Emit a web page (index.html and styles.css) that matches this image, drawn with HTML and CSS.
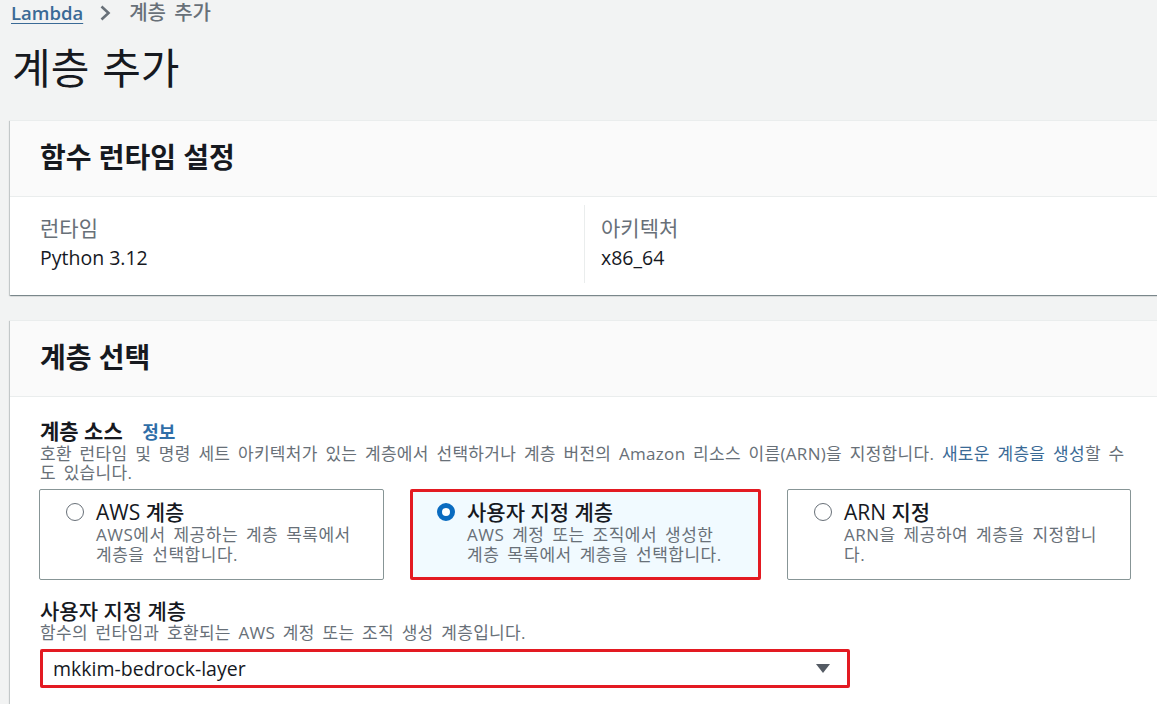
FILE: index.html
```html
<!DOCTYPE html>
<html lang="ko">
<head>
<meta charset="utf-8">
<title>계층 추가</title>
<link rel="stylesheet" href="styles.css">
</head>
<body>
<main class="page">
  <nav class="crumbs">
    <a class="crumb-link" href="#">Lambda</a>
    <svg class="crumb-sep" width="14" height="18" viewBox="0 0 14 18"><path d="M3.5 2.5 L10.5 9 L3.5 15.5" fill="none" stroke="#687078" stroke-width="2.6"/></svg>
    <span class="crumb-current">계층 추가</span>
  </nav>
  <h1 class="page-title">계층 추가</h1>

  <section class="card">
    <header class="card-head"><h2>함수 런타임 설정</h2></header>
    <div class="card-body kv">
      <div class="kv-col">
        <div class="kv-label">런타임</div>
        <div class="kv-value">Python 3.12</div>
      </div>
      <div class="kv-col kv-col-div">
        <div class="kv-label">아키텍처</div>
        <div class="kv-value">x86_64</div>
      </div>
    </div>
  </section>

  <section class="card card-second">
    <header class="card-head"><h2>계층 선택</h2></header>
    <div class="card-body form">
      <div class="field-label">계층 소스 <a class="info" href="#">정보</a></div>
      <p class="field-desc">호환 런타임 및 명령 세트 아키텍처가 있는 계층에서 선택하거나 계층 버전의 Amazon 리소스 이름(ARN)을 지정합니다. <a class="desc-link" href="#">새로운 계층을 생성</a>할 수 도 있습니다.</p>
      <div class="tiles">
        <label class="tile">
          <span class="radio"></span>
          <span class="tile-text">
            <span class="tile-title">AWS 계층</span>
            <span class="tile-desc">AWS에서 제공하는 계층 목록에서 계층을 선택합니다.</span>
          </span>
        </label>
        <label class="tile tile-selected">
          <span class="radio radio-on"></span>
          <span class="tile-text">
            <span class="tile-title">사용자 지정 계층</span>
            <span class="tile-desc">AWS 계정 또는 조직에서 생성한 계층 목록에서 계층을 선택합니다.</span>
          </span>
        </label>
        <label class="tile">
          <span class="radio"></span>
          <span class="tile-text">
            <span class="tile-title">ARN 지정</span>
            <span class="tile-desc">ARN을 제공하여 계층을 지정합니다.</span>
          </span>
        </label>
      </div>
      <div class="field-label field-label-2">사용자 지정 계층</div>
      <p class="field-desc field-desc-2">함수의 런타임과 호환되는 AWS 계정 또는 조직 생성 계층입니다.</p>
      <div class="select">
        <span class="select-value">mkkim-bedrock-layer</span>
        <svg class="caret" width="14" height="9" viewBox="0 0 14 9"><path d="M0 0 H14 L7 9 Z" fill="#545b64"/></svg>
      </div>
    </div>
  </section>
</main>
</body>
</html>
```

FILE: styles.css
```css
* { box-sizing: border-box; }
html, body {
  margin: 0;
  padding: 0;
  background: #f2f3f3;
  overflow: hidden;
}
body {
  font-family: "Open Sans", "Noto Sans CJK KR", sans-serif;
  color: #16191f;
  width: 1157px;
  height: 704px;
}
.page {
  padding: 0 0 0 10px;
}
.crumbs {
  display: flex;
  align-items: center;
  height: 26px;
  padding-left: 1px;
  font-size: 18.5px;
  line-height: 26px;
}
.crumb-link {
  color: #3a6a96;
  text-decoration: underline;
  text-underline-offset: 3px;
  font-weight: 600;
}
.crumb-sep {
  margin: 0 17px 0 15px;
}
.crumb-current {
  color: #687078;
  font-size: 20px;
  font-weight: 500;
  word-spacing: 3px;
}
.page-title {
  margin: 18px 0 0 2px;
  font-size: 42px;
  line-height: 48px;
  font-weight: 400;
  word-spacing: 2px;
}
.card {
  width: 1151px;
  margin-top: 28px;
  background: #fff;
  box-shadow: 0 1px 1px 0 rgba(0, 28, 36, 0.3), 1px 1px 1px 0 rgba(0, 28, 36, 0.15), -1px 1px 1px 0 rgba(0, 28, 36, 0.15);
  border-top: 1px solid #eaeded;
}
.card-second {
  margin-top: 25px;
}
.card-head {
  background: #fafafa;
  border-bottom: 1px solid #eaeded;
  padding: 19px 30px 22px;
}
.card-head h2 {
  margin: 0;
  font-size: 28px;
  line-height: 34px;
  font-weight: 700;
}
.card-body {
  padding: 8px 30px 12px;
}
.kv {
  display: grid;
  grid-template-columns: 544px 1fr;
}
.kv-col {
  padding: 8px 0 10px;
}
.kv-col-div {
  border-left: 1px solid #eaeded;
  padding-left: 16px;
}
.kv-label {
  color: #687078;
  font-size: 21px;
  line-height: 30px;
}
.kv-value {
  font-size: 19.5px;
  line-height: 30px;
  font-weight: 500;
}
.form {
  padding: 22px 26px 40px 30px;
}
.field-label {
  font-size: 21px;
  line-height: 24px;
  font-weight: 700;
}
.info {
  color: #2f6ea8;
  font-size: 18px;
  font-weight: 700;
  text-decoration: none;
  margin-left: 14px;
}
.field-desc {
  margin: 0;
  color: #687078;
  font-size: 17px;
  line-height: 19px;
  letter-spacing: 0.3px;
  word-spacing: 3px;
}
.desc-link {
  color: #3a6a96;
  text-decoration: none;
}
.tiles {
  display: grid;
  grid-template-columns: 345px 351px 344px;
  gap: 26px;
  margin-top: 7px;
  margin-left: -1px;
}
.tile {
  display: flex;
  align-items: flex-start;
  height: 91px;
  border: 1px solid #879596;
  border-radius: 2px;
  padding: 9px 26px 0 26px;
  background: #fff;
}
.tile-selected {
  border: 3px solid #e31a22;
  background: #f1faff;
  padding: 7px 36px 0 24px;
}
.radio {
  flex: none;
  width: 18px;
  height: 18px;
  border: 1.5px solid #687078;
  border-radius: 50%;
  margin-top: 4px;
  margin-right: 12px;
  background: #fff;
}
.radio-on {
  border: 5.5px solid #0a6bc0;
}
.tile-text {
  display: flex;
  flex-direction: column;
}
.tile-title {
  font-size: 21px;
  line-height: 26px;
  font-weight: 500;
}
.tile-desc {
  color: #687078;
  font-size: 17px;
  line-height: 20px;
  letter-spacing: 0.5px;
  word-spacing: 3px;
}
.field-label-2 {
  margin-top: 19px;
  font-weight: 500;
}
.field-desc-2 {
  margin-top: 0;
  line-height: 20px;
}
.select {
  display: flex;
  align-items: center;
  justify-content: space-between;
  width: 810px;
  height: 39px;
  margin-top: 6px;
  border: 3px solid #e31a22;
  border-radius: 2px;
  padding: 0 17px 0 10px;
  background: #fff;
}
.select-value {
  font-size: 19.5px;
  font-weight: 500;
}
```
